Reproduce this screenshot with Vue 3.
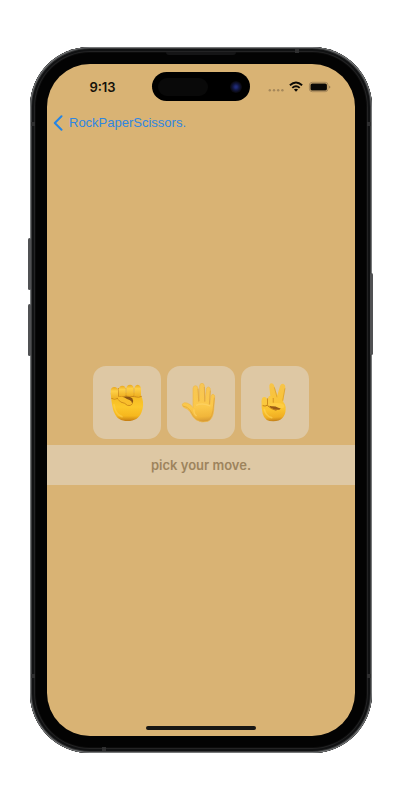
<script setup>
import { ref } from 'vue'

const moves = ['rock', 'paper', 'scissors']
const picked = ref('')
</script>

<template>
  <div class="stage">
    <div class="phone">
      <span class="side volume-up"></span>
      <span class="side volume-down"></span>
      <span class="side power"></span>
      <span class="speaker"></span>
      <span class="band top"></span>
      <span class="band bottom"></span>
      <span class="band left high"></span>
      <span class="band right high"></span>
      <span class="band left low"></span>
      <span class="band right low"></span>

      <div class="screen">
        <header class="status">
          <time class="clock">9:13</time>
          <div class="island">
            <span class="sensor"></span>
            <span class="camera"></span>
          </div>
          <svg class="indicators" viewBox="264 76 68 20" aria-hidden="true">
            <g fill="#a5875a">
              <circle cx="269.8" cy="89.3" r="1.2" />
              <circle cx="274" cy="89.3" r="1.2" />
              <circle cx="278.2" cy="89.3" r="1.2" />
              <circle cx="282.4" cy="89.3" r="1.2" />
            </g>
            <g fill="none" stroke="#0c0a06" stroke-width="1.9">
              <path d="M289.9 84.3Q296 78.6 302.1 84.3" />
              <path d="M292.3 86.9Q296 83.6 299.7 86.9" />
            </g>
            <path d="M293.9 88.6Q296 86.9 298.1 88.6L296 90.8Z" fill="#0c0a06" />
            <rect x="309.4" y="81.3" width="18.6" height="9.4" rx="2.8" fill="none" stroke="#a5875a" stroke-width="1" />
            <rect x="310.5" y="82.4" width="16.4" height="7.2" rx="1.7" fill="#0a0805" />
            <path d="M329 84.4Q330.4 84.9 330.4 86Q330.4 87.1 329 87.6Z" fill="#9b7f55" />
          </svg>
        </header>

        <nav class="nav">
          <a href="#" class="back">
            <svg class="chevron" viewBox="0 0 10 16" aria-hidden="true">
              <path d="M8.5 1.3L1.8 8L8.5 14.7" fill="none" stroke="#2485e6" stroke-width="2" stroke-linecap="round" stroke-linejoin="round" />
            </svg>
            <span>RockPaperScissors.</span>
          </a>
        </nav>

        <main class="game">
          <div class="moves">
            <button
              v-for="move in moves"
              :key="move"
              type="button"
              class="move"
              :aria-label="move"
              :aria-pressed="picked === move"
              @click="picked = move"
            >
              <svg v-if="move === 'rock'" class="hand" viewBox="9 18 204 219" aria-hidden="true">
                <defs>
                  <linearGradient id="rockSkin" x1="0" y1="0" x2="0" y2="1">
                    <stop offset="0" stop-color="#f2b51f" />
                    <stop offset=".5" stop-color="#fcc82b" />
                    <stop offset=".82" stop-color="#f6b71d" />
                    <stop offset="1" stop-color="#c47c12" />
                  </linearGradient>
                  <linearGradient id="rockFinger" x1="0" y1="0" x2="0" y2="1">
                    <stop offset="0" stop-color="#e8a820" />
                    <stop offset=".35" stop-color="#fed047" />
                    <stop offset="1" stop-color="#efb022" />
                  </linearGradient>
                </defs>
                <path d="M62 98C64 121 67 147 73 158C80 175 93 183 113 183C134 183 147 174 154 158C160 145 161 128 157 116C154 107 151 103 150 98Z" fill="url(#rockSkin)" />
                <path d="M85 84V110M108 84V108M132 84V108" fill="none" stroke="#cf8d1e" stroke-width="3.5" />
                <path d="M64 115Q73 120 84 115M88 110Q114 106 134 110Q147 114 155 109" fill="none" stroke="#cb8719" stroke-width="3" />
                <g fill="url(#rockFinger)">
                  <path d="M62 92Q63 81 73 81Q83 82 84 92V110Q80 116 73 116Q63 115 63 106Z" />
                  <path d="M86 88Q87 78 97 77Q107 78 107 87V106Q98 111 87 108Z" />
                  <path d="M109 84Q110 75 120 74Q130 75 131 84V106Q120 110 109 106Z" />
                  <path d="M133 85Q134 76 143 74Q152 76 153 86V104Q144 111 133 107Z" />
                </g>
                <path d="M96 112Q110 108 120 111L127 115Q132 123 127 131Q117 128 110 123Q101 121 96 112Z" fill="#8c5413" />
                <path d="M84 113Q92 108 102 112Q111 118 120 121Q127 124 126 132Q120 137 112 134Q105 129 95 127Q84 124 84 113Z" fill="#f9bf2c" />
                <path d="M84 118Q90 128 104 130L112 136Q121 139 127 132" fill="none" stroke="#d18e1b" stroke-width="3" />
                <path d="M72 134Q76 164 96 170" fill="none" stroke="#ffd655" stroke-width="5" stroke-linecap="round" opacity=".5" />
              </svg>

              <svg v-else-if="move === 'paper'" class="hand" viewBox="9 18 204 219" aria-hidden="true">
                <defs>
                  <linearGradient id="paperSkin" gradientUnits="userSpaceOnUse" x1="100" y1="70" x2="110" y2="188">
                    <stop offset="0" stop-color="#f7c655" />
                    <stop offset=".6" stop-color="#fbc84a" />
                    <stop offset=".85" stop-color="#f1b63a" />
                    <stop offset="1" stop-color="#cf9130" />
                  </linearGradient>
                </defs>
                <path d="M87 143L87 85Q88 77 94 77Q101 77 102 85L106 123L107 77Q108 70 114 70Q120 70 121 77L123 124L127 87Q129 80 134 81Q140 83 139 90L137 132L141 108Q143 102 148 103Q153 105 152 111L149 151Q147 177 132 184Q113 190 97 180Q86 172 78 155Q72 146 61 143Q53 139 55 132Q60 126 69 129Q81 133 87 143Z" fill="url(#paperSkin)" stroke="#efb848" stroke-width="2" stroke-linejoin="round" />
                <g fill="none" stroke="#dca03a" stroke-width="2">
                  <path d="M102 86L104 125" />
                  <path d="M121 81L122 125" />
                  <path d="M139 92L136 134" />
                  <path d="M151 113L147 151Q145 170 135 179" />
                  <path d="M57 138Q72 140 79 152Q88 171 98 178" />
                </g>
                <path d="M90 148Q88 161 98 168M96 136Q116 127 139 138" fill="none" stroke="#ffd66d" stroke-width="4" opacity=".6" />
              </svg>

              <svg v-else class="hand" viewBox="9 18 204 219" aria-hidden="true">
                <defs>
                  <linearGradient id="scissorsSkin" gradientUnits="userSpaceOnUse" x1="100" y1="70" x2="108" y2="186">
                    <stop offset="0" stop-color="#f6c44b" />
                    <stop offset=".68" stop-color="#fbc42e" />
                    <stop offset=".88" stop-color="#f0ae22" />
                    <stop offset="1" stop-color="#b87516" />
                  </linearGradient>
                </defs>
                <path d="M100 134L94 82Q93 71 100 70Q107 70 109 79L118 106L126 78Q129 70 136 71Q143 74 142 82L134 134Z" fill="url(#scissorsSkin)" />
                <path d="M109 82L117 112M141 85L134 122" fill="none" stroke="#d79a2b" stroke-width="2" />
                <path d="M71 123Q82 116 99 120L132 123Q144 131 143 148Q142 183 106 184Q80 184 74 161Q69 143 71 123Z" fill="url(#scissorsSkin)" />
                <path d="M88 115V134M105 114V128M74 137Q81 140 90 135" fill="none" stroke="#c58119" stroke-width="3" />
                <g fill="#fac83f">
                  <path d="M90 116Q91 107 97 107Q104 108 104 116V130Q96 136 90 131Z" />
                  <path d="M71 121Q72 111 79 111Q87 112 87 121V133Q79 138 72 133Z" />
                </g>
                <path d="M94 137Q108 130 126 137Q131 144 124 149Q112 151 104 146Q95 144 94 137Z" fill="#9a5b15" />
                <path d="M91 133Q104 127 126 130Q141 132 139 141Q134 147 121 143Q111 138 101 139Q93 139 91 133Z" fill="#fecd43" />
                <path d="M90 138Q98 147 114 151" fill="none" stroke="#bd7a19" stroke-width="3" stroke-linecap="round" />
                <path d="M79 148Q83 168 101 173" fill="none" stroke="#ffdb64" stroke-width="5" stroke-linecap="round" opacity=".5" />
              </svg>
            </button>
          </div>
          <p class="prompt">pick your move.</p>
        </main>

        <footer class="home"><span class="home-bar"></span></footer>
      </div>
    </div>
  </div>
</template>

<style>
body {
  margin: 0;
  background: #fff;
}
</style>

<style scoped>
.stage {
  box-sizing: border-box;
  display: flex;
  min-height: 100vh;
  padding: 47px 28px 47px 30px;
  font-family: Inter, "Liberation Sans", sans-serif;
}

.phone {
  position: relative;
  box-sizing: border-box;
  display: flex;
  flex: 1;
  padding: 17px;
  border-radius: 60px;
  background: #030303;
  box-shadow:
    inset 0 0 0 1px #77797a,
    inset 0 0 0 2px #3a3b3c,
    inset 0 0 0 4px #111213,
    inset 0 0 0 5px #232324,
    inset 0 0 0 6px #0b0b0b;
}

.side {
  position: absolute;
  width: 3px;
  border-radius: 2px;
  background: #505153;
}

.volume-up {
  top: 191px;
  left: -2px;
  height: 52px;
}

.volume-down {
  top: 257px;
  left: -2px;
  height: 52px;
}

.power {
  top: 226px;
  right: -1px;
  height: 82px;
}

.speaker {
  position: absolute;
  top: 5px;
  left: 50%;
  width: 70px;
  height: 3px;
  margin-left: -35px;
  border-radius: 0 0 3px 3px;
  background: #151516;
}

.band {
  position: absolute;
  width: 4px;
  height: 4px;
  background: #2f2f30;
}

.band.top {
  top: 2px;
  right: 73px;
}

.band.bottom {
  bottom: 2px;
  left: 72px;
}

.band.left {
  left: 1px;
}

.band.right {
  right: 1px;
}

.band.high {
  top: 75px;
}

.band.low {
  bottom: 75px;
}

.screen {
  display: flex;
  flex: 1;
  flex-direction: column;
  min-width: 0;
  overflow: hidden;
  border-radius: 43px;
  background: #d9b374;
}

.status {
  display: grid;
  grid-template-columns: 1fr 98px 1fr;
  align-items: center;
  height: 45px;
}

.clock {
  padding-left: 6px;
  color: #15110a;
  font-size: 13px;
  font-weight: 600;
  line-height: 16px;
  text-align: center;
}

.island {
  box-sizing: border-box;
  display: flex;
  align-items: center;
  justify-content: space-between;
  height: 29px;
  padding: 0 8px 0 6px;
  border-radius: 15px;
  background: #000;
}

.sensor {
  width: 50px;
  height: 18px;
  border-radius: 9px;
  background: #090909;
}

.camera {
  width: 12px;
  height: 12px;
  border-radius: 50%;
  background: radial-gradient(circle, #202b78 0 1px, #121846 3px, #0b0c1c 5px, #08080c 6px);
}

.indicators {
  width: 68px;
  height: 20px;
  margin-left: 14px;
}

.nav {
  display: flex;
  align-items: center;
  height: 28px;
  padding-left: 6px;
}

.back {
  display: flex;
  align-items: center;
  gap: 6px;
  color: #2f86e0;
  font-family: "Liberation Sans", Arial, sans-serif;
  font-size: 13px;
  line-height: 18px;
  text-decoration: none;
}

.chevron {
  width: 10px;
  height: 16px;
}

.game {
  display: flex;
  flex: 1;
  flex-direction: column;
  justify-content: center;
  gap: 6px;
}

.moves {
  display: flex;
  justify-content: center;
  gap: 6px;
}

.move {
  width: 68px;
  height: 73px;
  padding: 0;
  border: 0;
  border-radius: 13px;
  background: #dec8a4;
  cursor: pointer;
}

.hand {
  display: block;
  width: 100%;
  height: 100%;
}

.prompt {
  margin: 0;
  padding: 11px 0;
  background: #dec8a4;
  color: #9d845d;
  font-size: 13px;
  font-weight: 600;
  line-height: 18px;
  text-align: center;
}

.home {
  box-sizing: border-box;
  display: flex;
  align-items: flex-end;
  justify-content: center;
  height: 22px;
  padding-bottom: 6px;
}

.home-bar {
  width: 110px;
  height: 4px;
  border-radius: 2px;
  background: #171614;
}
</style>
